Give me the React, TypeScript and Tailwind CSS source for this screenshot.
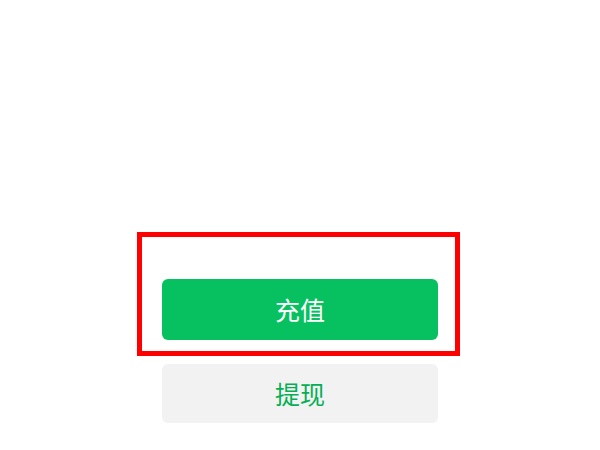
export default function App() {
  return (
    <div
      className="w-[600px] h-[450px] bg-white flex flex-col"
      style={{ fontFamily: '"Noto Sans CJK SC", "Noto Sans", sans-serif' }}
    >
      {/* highlighted recharge button */}
      <div className="mt-[232px] ml-[137px] w-[323px] h-[124px] border-[5px] border-[#ff0000] pt-[42px] pl-[20px]">
        <button className="w-[276px] h-[61px] rounded-[6px] bg-[#07c160] text-white text-[25px] font-normal flex items-center justify-center">
          充值
        </button>
      </div>

      {/* withdraw */}
      <button className="mt-[8px] ml-[162px] w-[276px] h-[59px] rounded-[6px] bg-[#f2f2f2] text-[#06ae56] text-[25px] font-normal flex items-center justify-center">
        提现
      </button>
    </div>
  )
}
